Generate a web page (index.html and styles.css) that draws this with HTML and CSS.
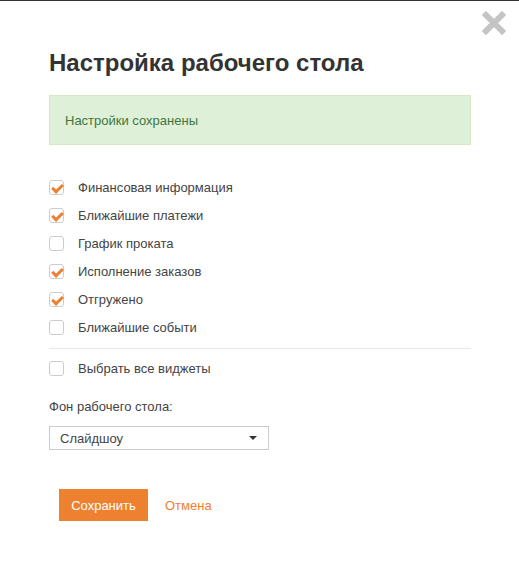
FILE: index.html
```html
<!DOCTYPE html>
<html lang="ru">
<head>
<meta charset="utf-8">
<link rel="stylesheet" href="styles.css">
</head>
<body>
<div class="topbar"></div>
<div class="modal">
  <button class="close" aria-label="Закрыть">
    <svg width="24" height="24" viewBox="0 0 24 24"><path d="M4 4 L20 20 M20 4 L4 20" stroke="#c4c4c4" stroke-width="6" stroke-linecap="square"/></svg>
  </button>
  <h1 class="title">Настройка рабочего стола</h1>
  <div class="alert">Настройки сохранены</div>
  <ul class="checks">
    <li class="check"><span class="box on"></span>Финансовая информация</li>
    <li class="check"><span class="box on"></span>Ближайшие платежи</li>
    <li class="check"><span class="box"></span>График проката</li>
    <li class="check"><span class="box on"></span>Исполнение заказов</li>
    <li class="check"><span class="box on"></span>Отгружено</li>
    <li class="check"><span class="box"></span>Ближайшие событи</li>
  </ul>
  <div class="divider"></div>
  <div class="check all"><span class="box"></span>Выбрать все виджеты</div>
  <div class="label">Фон рабочего стола:</div>
  <div class="select"><span>Слайдшоу</span><span class="caret"></span></div>
  <div class="footer">
    <button class="btn-save">Сохранить</button>
    <a class="cancel">Отмена</a>
  </div>
</div>
</body>
</html>
```
FILE: styles.css
```css
html, body { margin: 0; padding: 0; background: #fff; }
body { font-family: "Liberation Sans", Arial, sans-serif; color: #333; font-size: 13px; }
.topbar { height: 1px; background: #333; }
.modal { position: relative; padding: 0 48px 0 49px; }
.close { position: absolute; right: 13px; top: 10px; border: 0; background: none; padding: 0; width: 24px; height: 24px; }
.close svg { display: block; }
.title { margin: 0; padding-top: 48px; font-size: 24px; font-weight: bold; line-height: 28px; color: #333; }
.alert { margin-top: 18px; background: #dff0d8; border: 1px solid #d6e9c6; color: #3c763d; height: 50px; box-sizing: border-box; padding: 0 15px; display: flex; align-items: center; }
.checks { list-style: none; margin: 28px 0 0; padding: 0; }
.check { display: flex; align-items: center; height: 28px; color: #444; }
.box { width: 13px; height: 13px; border: 1px solid #ccc; border-radius: 3px; margin-right: 14px; position: relative; box-sizing: content-box; }
.box.on::after { content: ""; position: absolute; left: 4px; top: 1px; width: 4px; height: 8px; border: solid #ef7f2f; border-width: 0 3px 3px 0; transform: rotate(45deg); }
.divider { height: 1px; background: #e8e8e8; margin: 7px 0 5px; }
.label { margin-top: 9px; height: 30px; display: flex; align-items: center; color: #444; }
.select { margin-top: 5px; width: 197px; height: 22px; border: 1px solid #ccc; display: flex; align-items: center; justify-content: space-between; padding: 0 11px 0 10px; box-sizing: content-box; color: #444; }
.caret { width: 0; height: 0; border-left: 4px solid transparent; border-right: 4px solid transparent; border-top: 4px solid #333; }
.footer { margin-top: 39px; padding-left: 10px; display: flex; align-items: center; }
.btn-save { background: #ee8130; color: #fff; border: 0; font-family: inherit; font-size: 13px; width: 89px; height: 32px; padding: 0; }
.cancel { margin-left: 17px; color: #ef7f2f; }
```
